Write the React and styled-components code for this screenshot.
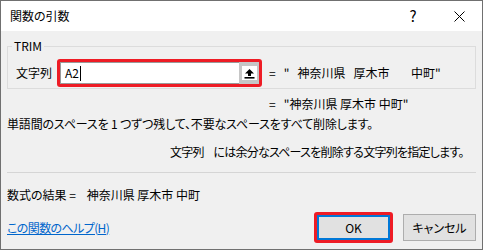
import styled, { createGlobalStyle } from "styled-components";

const GlobalStyle = createGlobalStyle`
  html, body {
    margin: 0;
    padding: 0;
    background: #f0f0f0;
  }
  body {
    font-family: "Noto Sans CJK JP", "Noto Sans", sans-serif;
    font-size: 12px;
    line-height: 14px;
    color: #000;
    font-feature-settings: "palt";
  }
`;

const Window = styled.div`
  width: 483px;
  height: 250px;
  box-sizing: border-box;
  border: 1px solid #707070;
  background: #f0f0f0;
  display: flex;
  flex-direction: column;
`;

const TitleBar = styled.div`
  height: 30px;
  flex-shrink: 0;
  background: #fff;
  display: flex;
  align-items: center;
  padding-left: 9px;
`;

const Title = styled.div`
  flex: 1;
`;

const TitleButton = styled.div`
  width: 46px;
  height: 30px;
  display: flex;
  align-items: center;
  justify-content: center;
  font-size: 15px;
`;

const Body = styled.div`
  flex: 1;
  padding: 8px 6px 0 6px;
  display: flex;
  flex-direction: column;
`;

const Group = styled.fieldset`
  margin: 0;
  padding: 0 4px 1px;
  border: 1px solid #dcdcdc;
  min-width: 0;
`;

const Legend = styled.legend`
  padding: 0 2px;
  line-height: 14px;
`;

const ArgRow = styled.div`
  display: flex;
  align-items: center;
  gap: 5px;
  margin-top: 6px;
  padding-left: 4px;
`;

const Highlight = styled.div`
  box-sizing: border-box;
  border: 3px solid #ee1c25;
  border-radius: 3px;
  display: flex;
`;

const InputFrame = styled(Highlight)`
  width: 205px;
  height: 28px;
`;

const InputField = styled.div`
  flex: 1;
  background: #fff;
  border: 1px solid #9a9a9a;
  border-right: none;
  display: flex;
  align-items: center;
  padding-left: 4px;
`;

const Caret = styled.span`
  display: inline-block;
  width: 1px;
  height: 15px;
  background: #000;
  margin-left: 1px;
`;

const RefButton = styled.div`
  width: 20px;
  background: #c6c6c6;
  display: flex;
  align-items: center;
  justify-content: center;
`;

const RefFace = styled.div`
  width: 15px;
  height: 14px;
  background: #fff;
  display: flex;
  align-items: center;
  justify-content: center;
`;

const Value = styled.span`
  white-space: pre;
  margin-left: ${(p) => p.$offset || 0}px;
`;

const ResultLine = styled.div`
  margin-top: 8px;
  padding-left: 262px;
  white-space: pre;
`;

const Description = styled.div`
  margin-top: ${(p) => p.$top}px;
  padding-left: ${(p) => p.$indent || 0}px;
  letter-spacing: ${(p) => p.$tracking || 0}px;
  white-space: pre;
`;

const Separator = styled.hr`
  margin: 13px 0 0;
  border: none;
  border-top: 1px solid #d5d5d5;
  height: 0;
`;

const Footer = styled.div`
  margin-top: 10px;
  display: flex;
  align-items: center;
`;

const HelpLink = styled.a`
  color: #0066cc;
  text-decoration: underline;
  letter-spacing: -0.6px;
  flex: 1;
  cursor: pointer;
`;

const OkFrame = styled(Highlight)`
  width: 79px;
  height: 31px;
`;

const Button = styled.button`
  font: inherit;
  font-feature-settings: "palt";
  color: #000;
  background: #e1e1e1;
  box-sizing: border-box;
  border: ${(p) => (p.$primary ? "2px solid #0078d7" : "1px solid #adadad")};
  width: ${(p) => (p.$primary ? "100%" : "73px")};
  height: ${(p) => (p.$primary ? "100%" : "27px")};
  margin-left: ${(p) => (p.$primary ? 0 : 10)}px;
  padding: 0;
`;

const RefIcon = () => (
  <svg width="11" height="11" viewBox="0 0 11 11">
    <path d="M5.5 1 L10 5.5 L7 5.5 L7 8 L4 8 L4 5.5 L1 5.5 Z" fill="#000" />
    <rect x="0.5" y="9" width="10" height="1.6" fill="#000" />
  </svg>
);

const CloseIcon = () => (
  <svg width="11" height="11" viewBox="0 0 11 11">
    <path d="M0.5 0.5 L10.5 10.5 M10.5 0.5 L0.5 10.5" stroke="#000" strokeWidth="1" />
  </svg>
);

export default function App() {
  return (
    <>
      <GlobalStyle />
      <Window>
        <TitleBar>
          <Title>関数の引数</Title>
          <TitleButton>?</TitleButton>
          <TitleButton>
            <CloseIcon />
          </TitleButton>
        </TitleBar>
        <Body>
          <Group>
            <Legend>TRIM</Legend>
            <ArgRow>
              <span>文字列</span>
              <InputFrame>
                <InputField>
                  A2
                  <Caret />
                </InputField>
                <RefButton>
                  <RefFace>
                    <RefIcon />
                  </RefFace>
                </RefButton>
              </InputFrame>
              <Value $offset={2}>{'=   "   神奈川県   厚木市        中町"'}</Value>
            </ArgRow>
          </Group>
          <ResultLine>{'=   "神奈川県 厚木市 中町"'}</ResultLine>
          <Description $top={6} $tracking={-0.15}>
            単語間のスペースを 1 つずつ残して、不要なスペースをすべて削除します。
          </Description>
          <Description $top={14} $indent={163} $tracking={-0.75}>
            {"文字列     には余分なスペースを削除する文字列を指定します。"}
          </Description>
          <Separator />
          <Description $top={15}>{"数式の結果 =    神奈川県 厚木市 中町"}</Description>
          <Footer>
            <HelpLink>この関数のヘルプ(H)</HelpLink>
            <OkFrame>
              <Button $primary>OK</Button>
            </OkFrame>
            <Button>キャンセル</Button>
          </Footer>
        </Body>
      </Window>
    </>
  );
}
